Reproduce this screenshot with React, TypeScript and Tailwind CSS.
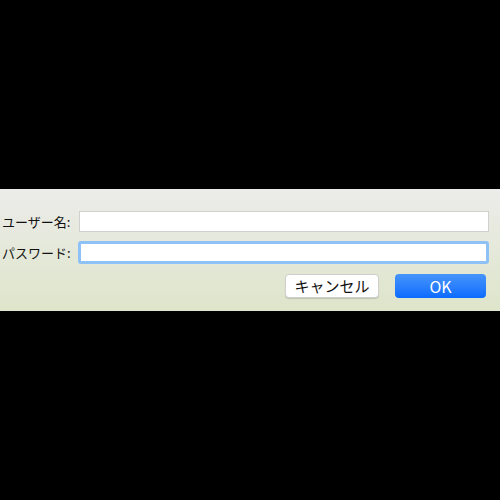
export default function App() {
  const font = { fontFamily: '"Noto Sans CJK JP", "Liberation Sans", sans-serif' }

  return (
    <div className="flex h-[500px] w-[500px] flex-col justify-center bg-black" style={font}>
      <div className="flex h-[122px] flex-col bg-gradient-to-b from-[#ececea] to-[#dee5ca] pt-[22px] pr-[12px] pl-[2px]">
        <div className="grid grid-cols-[76px_1fr] items-center gap-y-[9px]">
          <label className="text-[13px] leading-none text-[#111]">ユーザー名:</label>
          <input
            className="ml-[1px] h-[21px] border border-[#d0d0d0] bg-white px-1 text-[13px] outline-none"
            defaultValue=""
          />
          <label className="text-[13px] leading-none text-[#111]">パスワード:</label>
          <input
            type="password"
            className="h-[23px] w-[411px] rounded-[3px] border-[3px] border-[#8ec1f6] bg-white px-1 text-[13px] outline-none"
            defaultValue=""
          />
        </div>
        <div className="mt-[10px] flex justify-end gap-[16px] pr-[2px]">
          <button className="flex h-[24px] w-[94px] items-center justify-center rounded-[4px] border border-[#cfcfcf] bg-white text-[15px] text-[#111] shadow-[0_1px_1px_rgba(0,0,0,0.15)]">
            キャンセル
          </button>
          <button className="flex h-[24px] w-[91px] items-center justify-center rounded-[4px] bg-gradient-to-b from-[#4594fb] to-[#0a6bfe] text-[16px] text-white">
            OK
          </button>
        </div>
      </div>
    </div>
  )
}
